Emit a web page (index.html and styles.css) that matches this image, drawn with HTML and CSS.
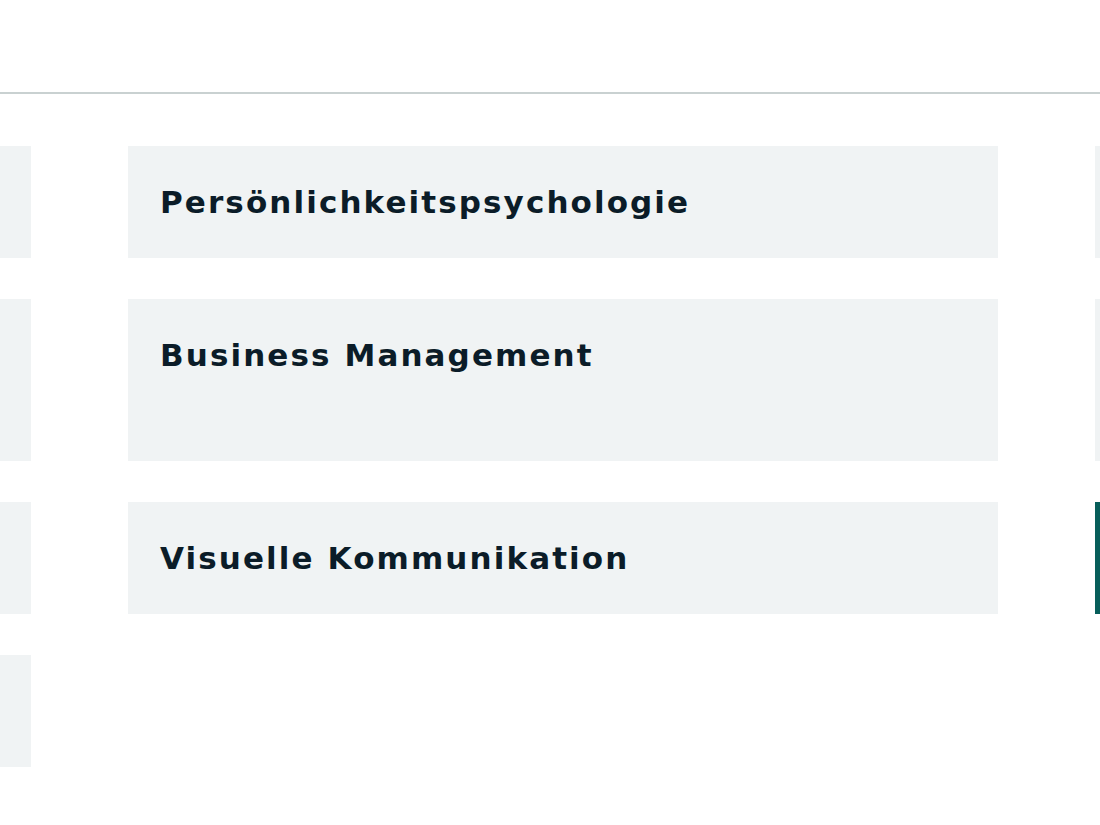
FILE: index.html
```html
<!DOCTYPE html>
<html lang="de">
<head>
    <meta charset="UTF-8">
    <meta name="viewport" content="width=device-width, initial-scale=1.0">
    <title>Kurse</title>
    <link rel="stylesheet" href="styles.css">
</head>
<body>
    <header class="top-bar"></header>

    <main class="course-list">
        <div class="course-grid">
            <a class="course-card" href="#">Marketing Grundlagen</a>
            <a class="course-card" href="#">Persönlichkeitspsychologie</a>
            <a class="course-card" href="#">Projektmanagement</a>

            <a class="course-card" href="#">Wirtschaftspsychologie</a>
            <a class="course-card" href="#">Business Management</a>
            <a class="course-card" href="#">Nachhaltige Unternehmensführung und Corporate Responsibility</a>

            <a class="course-card" href="#">Mediendesign</a>
            <a class="course-card" href="#">Visuelle Kommunikation</a>
            <a class="course-card active" href="#">Digitale Transformation</a>

            <a class="course-card" href="#">Soziale Arbeit</a>
        </div>
    </main>
</body>
</html>
```

FILE: styles.css
```css
/* Page */
body {
    margin: 0;
    font-family: "DejaVu Sans", "Noto Sans", sans-serif;
    background-color: #ffffff;
    color: #0b1c28;
    overflow: hidden;
}

.top-bar {
    height: 92px;
    border-bottom: 2px solid #c9d1d1;
}

/* Course grid */
.course-list {
    padding-top: 52px;
}

.course-grid {
    display: grid;
    grid-template-columns: repeat(3, 870px);
    column-gap: 97px;
    row-gap: 41px;
    margin-left: -839px;
    width: max-content;
}

.course-card {
    display: block;
    padding: 31px 32px;
    background-color: #f0f3f4;
    color: #0b1c28;
    text-decoration: none;
    font-size: 31px;
    font-weight: bold;
    line-height: 50px;
    letter-spacing: 2.1px;
}

.course-card.active {
    background-color: #075e5a;
    color: #ffffff;
}
```
